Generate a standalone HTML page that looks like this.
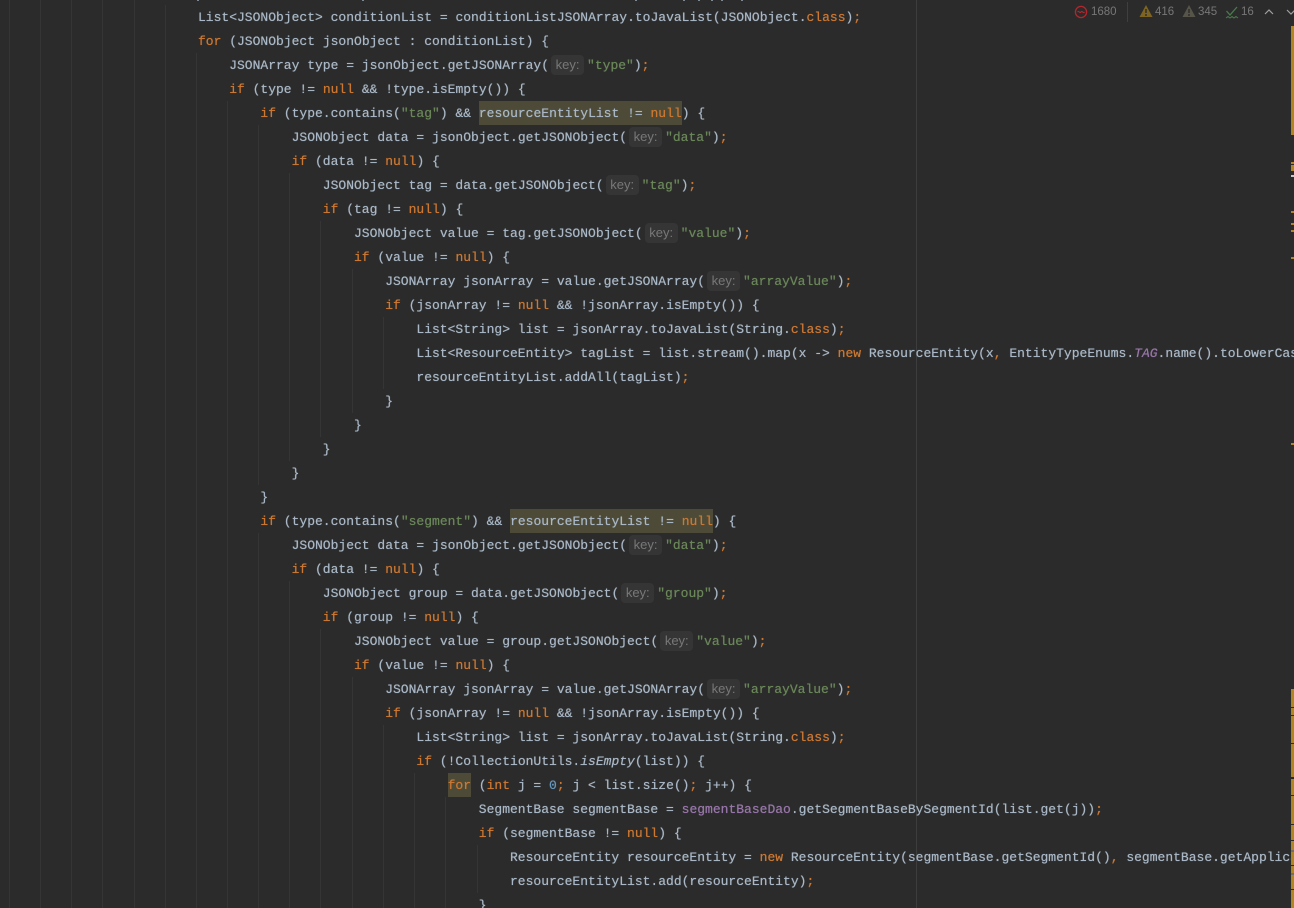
<!DOCTYPE html>
<html><head><meta charset="utf-8">
<style>
html,body{margin:0;padding:0;background:#2b2b2b;width:1294px;height:908px;overflow:hidden}
#w{position:relative;z-index:0;width:1294px;height:908px;overflow:hidden;background:#2b2b2b}
.g{position:absolute;width:1px;background:#353535}
.m{position:absolute;top:0;width:2px;height:1px;background:#7f8994}
.l{position:absolute;white-space:pre;font:13px/24px "Liberation Mono",monospace;color:#a9b7c6;height:24px;margin-top:1px;letter-spacing:0;text-shadow:0 0 .6px currentColor}
.k{color:#cc7832}.s{color:#6a8759}.n{color:#6897bb}.f{color:#9876aa}.i{font-style:italic}
.h{display:inline-block;height:24px;position:relative}
.h::before{content:"";position:absolute;left:0;right:0;top:-1px;height:24px;background:#4d4b38;z-index:-1}
.p{display:inline-block;width:33px;height:20px;margin:1px 3px 0 2px;background:#353535;border-radius:4px;color:#787878;font:13px/20px "Liberation Sans",sans-serif;text-align:center;vertical-align:top;text-shadow:none}
.st{position:absolute;left:1291px;width:3px;background:#b2861f}
.t{position:absolute;top:5px;font:11.5px/14px "Liberation Sans",sans-serif;color:#777}
</style></head><body><div id="w">
<div class="g" style="left:9px;top:0;height:908px"></div>
<div class="g" style="left:40px;top:0;height:908px"></div>
<div class="g" style="left:71px;top:0;height:908px"></div>
<div class="g" style="left:102px;top:0;height:908px"></div>
<div class="g" style="left:134px;top:0;height:908px"></div>
<div class="g" style="left:165px;top:5px;height:903px"></div>
<div class="g" style="left:196px;top:53px;height:855px"></div>
<div class="g" style="left:227px;top:101px;height:807px"></div>
<div class="g" style="left:258px;top:125px;height:360px"></div>
<div class="g" style="left:289px;top:173px;height:288px"></div>
<div class="g" style="left:320px;top:221px;height:216px"></div>
<div class="g" style="left:352px;top:269px;height:144px"></div>
<div class="g" style="left:383px;top:317px;height:72px"></div>
<div class="g" style="left:258px;top:533px;height:375px"></div>
<div class="g" style="left:289px;top:581px;height:327px"></div>
<div class="g" style="left:320px;top:629px;height:279px"></div>
<div class="g" style="left:352px;top:677px;height:231px"></div>
<div class="g" style="left:383px;top:725px;height:183px"></div>
<div class="g" style="left:414px;top:773px;height:135px"></div>
<div class="g" style="left:445px;top:797px;height:111px"></div>
<div class="g" style="left:477px;top:845px;height:48px"></div>
<div class="g" style="left:916px;top:0;height:908px;background:#3d3d3d"></div>

<div class="m" style="left:197px"></div><div class="m" style="left:362px"></div><div class="m" style="left:635px"></div><div class="m" style="left:683px"></div><div class="m" style="left:698px"></div><div class="m" style="left:711px"></div><div class="m" style="left:721px"></div><div class="m" style="left:741px"></div>

<div class="l" style="left:198px;top:5px">List&lt;JSONObject&gt; conditionList = conditionListJSONArray.toJavaList(JSONObject.<span class="k">class</span>)<span class="k">;</span></div>
<div class="l" style="left:198px;top:29px"><span class="k">for</span> (JSONObject jsonObject : conditionList) {</div>
<div class="l" style="left:229.2px;top:53px">JSONArray type = jsonObject.getJSONArray(<span class="p">key:</span><span class="s">"type"</span>)<span class="k">;</span></div>
<div class="l" style="left:229.2px;top:77px"><span class="k">if</span> (type != <span class="k">null</span> &amp;&amp; !type.isEmpty()) {</div>
<div class="l" style="left:260.4px;top:101px"><span class="k">if</span> (type.contains(<span class="s">"tag"</span>) &amp;&amp; <span class="h">resourceEntityList != <span class="k">null</span></span>) {</div>
<div class="l" style="left:291.6px;top:125px">JSONObject data = jsonObject.getJSONObject(<span class="p">key:</span><span class="s">"data"</span>)<span class="k">;</span></div>
<div class="l" style="left:291.6px;top:149px"><span class="k">if</span> (data != <span class="k">null</span>) {</div>
<div class="l" style="left:322.8px;top:173px">JSONObject tag = data.getJSONObject(<span class="p">key:</span><span class="s">"tag"</span>)<span class="k">;</span></div>
<div class="l" style="left:322.8px;top:197px"><span class="k">if</span> (tag != <span class="k">null</span>) {</div>
<div class="l" style="left:354px;top:221px">JSONObject value = tag.getJSONObject(<span class="p">key:</span><span class="s">"value"</span>)<span class="k">;</span></div>
<div class="l" style="left:354px;top:245px"><span class="k">if</span> (value != <span class="k">null</span>) {</div>
<div class="l" style="left:385.2px;top:269px">JSONArray jsonArray = value.getJSONArray(<span class="p">key:</span><span class="s">"arrayValue"</span>)<span class="k">;</span></div>
<div class="l" style="left:385.2px;top:293px"><span class="k">if</span> (jsonArray != <span class="k">null</span> &amp;&amp; !jsonArray.isEmpty()) {</div>
<div class="l" style="left:416.4px;top:317px">List&lt;String&gt; list = jsonArray.toJavaList(String.<span class="k">class</span>)<span class="k">;</span></div>
<div class="l" style="left:416.4px;top:341px">List&lt;ResourceEntity&gt; tagList = list.stream().map(x -&gt; <span class="k">new</span> ResourceEntity(x<span class="k">,</span> EntityTypeEnums.<span class="f i">TAG</span>.name().toLowerCase()))</div>
<div class="l" style="left:416.4px;top:365px">resourceEntityList.addAll(tagList)<span class="k">;</span></div>
<div class="l" style="left:385.2px;top:389px">}</div>
<div class="l" style="left:354px;top:413px">}</div>
<div class="l" style="left:322.8px;top:437px">}</div>
<div class="l" style="left:291.6px;top:461px">}</div>
<div class="l" style="left:260.4px;top:485px">}</div>
<div class="l" style="left:260.4px;top:509px"><span class="k">if</span> (type.contains(<span class="s">"segment"</span>) &amp;&amp; <span class="h">resourceEntityList != <span class="k">null</span></span>) {</div>
<div class="l" style="left:291.6px;top:533px">JSONObject data = jsonObject.getJSONObject(<span class="p">key:</span><span class="s">"data"</span>)<span class="k">;</span></div>
<div class="l" style="left:291.6px;top:557px"><span class="k">if</span> (data != <span class="k">null</span>) {</div>
<div class="l" style="left:322.8px;top:581px">JSONObject group = data.getJSONObject(<span class="p">key:</span><span class="s">"group"</span>)<span class="k">;</span></div>
<div class="l" style="left:322.8px;top:605px"><span class="k">if</span> (group != <span class="k">null</span>) {</div>
<div class="l" style="left:354px;top:629px">JSONObject value = group.getJSONObject(<span class="p">key:</span><span class="s">"value"</span>)<span class="k">;</span></div>
<div class="l" style="left:354px;top:653px"><span class="k">if</span> (value != <span class="k">null</span>) {</div>
<div class="l" style="left:385.2px;top:677px">JSONArray jsonArray = value.getJSONArray(<span class="p">key:</span><span class="s">"arrayValue"</span>)<span class="k">;</span></div>
<div class="l" style="left:385.2px;top:701px"><span class="k">if</span> (jsonArray != <span class="k">null</span> &amp;&amp; !jsonArray.isEmpty()) {</div>
<div class="l" style="left:416.4px;top:725px">List&lt;String&gt; list = jsonArray.toJavaList(String.<span class="k">class</span>)<span class="k">;</span></div>
<div class="l" style="left:416.4px;top:749px"><span class="k">if</span> (!CollectionUtils.<span class="i">isEmpty</span>(list)) {</div>
<div class="l" style="left:447.6px;top:773px"><span class="h k">for</span> (<span class="k">int</span> j = <span class="n">0</span><span class="k">;</span> j &lt; list.size()<span class="k">;</span> j++) {</div>
<div class="l" style="left:478.8px;top:797px">SegmentBase segmentBase = <span class="f">segmentBaseDao</span>.getSegmentBaseBySegmentId(list.get(j))<span class="k">;</span></div>
<div class="l" style="left:478.8px;top:821px"><span class="k">if</span> (segmentBase != <span class="k">null</span>) {</div>
<div class="l" style="left:510px;top:845px">ResourceEntity resourceEntity = <span class="k">new</span> ResourceEntity(segmentBase.getSegmentId()<span class="k">,</span> segmentBase.getApplicationId())</div>
<div class="l" style="left:510px;top:869px">resourceEntityList.add(resourceEntity)<span class="k">;</span></div>
<div class="l" style="left:478.8px;top:893px">}</div>

<svg style="position:absolute;left:1074px;top:5px" width="15" height="15" viewBox="0 0 15 15"><circle cx="7" cy="7" r="5.600" fill="none" stroke="#b5262c" stroke-width="1.300"/><path d="M3.500 7q1-1.200 1.800 0t1.700 0 1.700 0 1.800 0" stroke="#b5262c" stroke-width="1.100" fill="none"/></svg>
<div class="t" style="left:1091px">1680</div>
<div style="position:absolute;left:1127px;top:2px;width:1px;height:20px;background:#3f3f3f"></div>
<svg style="position:absolute;left:1139px;top:4px" width="14" height="14" viewBox="0 0 14 14"><path d="M7 1L13.500 13H.5Z" fill="#7d6421"/><path d="M7 5v4M7 10v2" stroke="#2b2b2b" stroke-width="1.400"/></svg>
<div class="t" style="left:1155px">416</div>
<svg style="position:absolute;left:1182px;top:4px" width="14" height="14" viewBox="0 0 14 14"><path d="M7 1L13.500 13H.5Z" fill="#57544a"/><path d="M7 5v4M7 10v2" stroke="#2b2b2b" stroke-width="1.400"/></svg>
<div class="t" style="left:1198px">345</div>
<svg style="position:absolute;left:1225px;top:6px" width="14" height="14" viewBox="0 0 14 14"><path d="M1.500 5L5 9L12 1" fill="none" stroke="#4a7a4f" stroke-width="1.300"/><path d="M1 12l2-1.500 2 1.500 2-1.500 2 1.500 2-1.500 2 1.500" fill="none" stroke="#4a7a4f" stroke-width="1"/></svg>
<div class="t" style="left:1241px">16</div>
<svg style="position:absolute;left:1264px;top:8px" width="10" height="8" viewBox="0 0 10 8"><path d="M1 6L5 2L9 6" fill="none" stroke="#a0a0a0" stroke-width="1.200"/></svg>
<svg style="position:absolute;left:1286px;top:8px" width="8" height="8" viewBox="0 0 8 8"><path d="M1 2L5 6L9 2" fill="none" stroke="#a0a0a0" stroke-width="1.200"/></svg>

<div class="st" style="top:26px;height:109px"></div>
<div class="st" style="top:162px;height:2px"></div>
<div class="st" style="top:165px;height:6px"></div>
<div class="st" style="top:175px;height:2px;background:#c8c8c8"></div>
<div class="st" style="top:211px;height:2px"></div>
<div class="st" style="top:223px;height:2px"></div>
<div class="st" style="top:230px;height:2px"></div>
<div class="st" style="top:257px;height:2px"></div>
<div class="st" style="top:443px;height:2px"></div>
<div class="st" style="top:689px;height:18px"></div>
<div class="st" style="top:708px;height:7px"></div>
<div class="st" style="top:716px;height:27px"></div>
<div class="st" style="top:744px;height:33px"></div>
<div class="st" style="top:779px;height:16px"></div>
<div class="st" style="top:796px;height:28px"></div>
<div class="st" style="top:825px;height:15px"></div>
<div class="st" style="top:841px;height:9px"></div>
<div class="st" style="top:850px;height:2px;background:#6e6e6e"></div>
<div class="st" style="top:852px;height:13px"></div>
<div class="st" style="top:866px;height:7px"></div>
<div class="st" style="top:873px;height:2px;background:#6e6e6e"></div>
<div class="st" style="top:875px;height:14px"></div>
<div class="st" style="top:890px;height:18px"></div>
</div></body></html>
